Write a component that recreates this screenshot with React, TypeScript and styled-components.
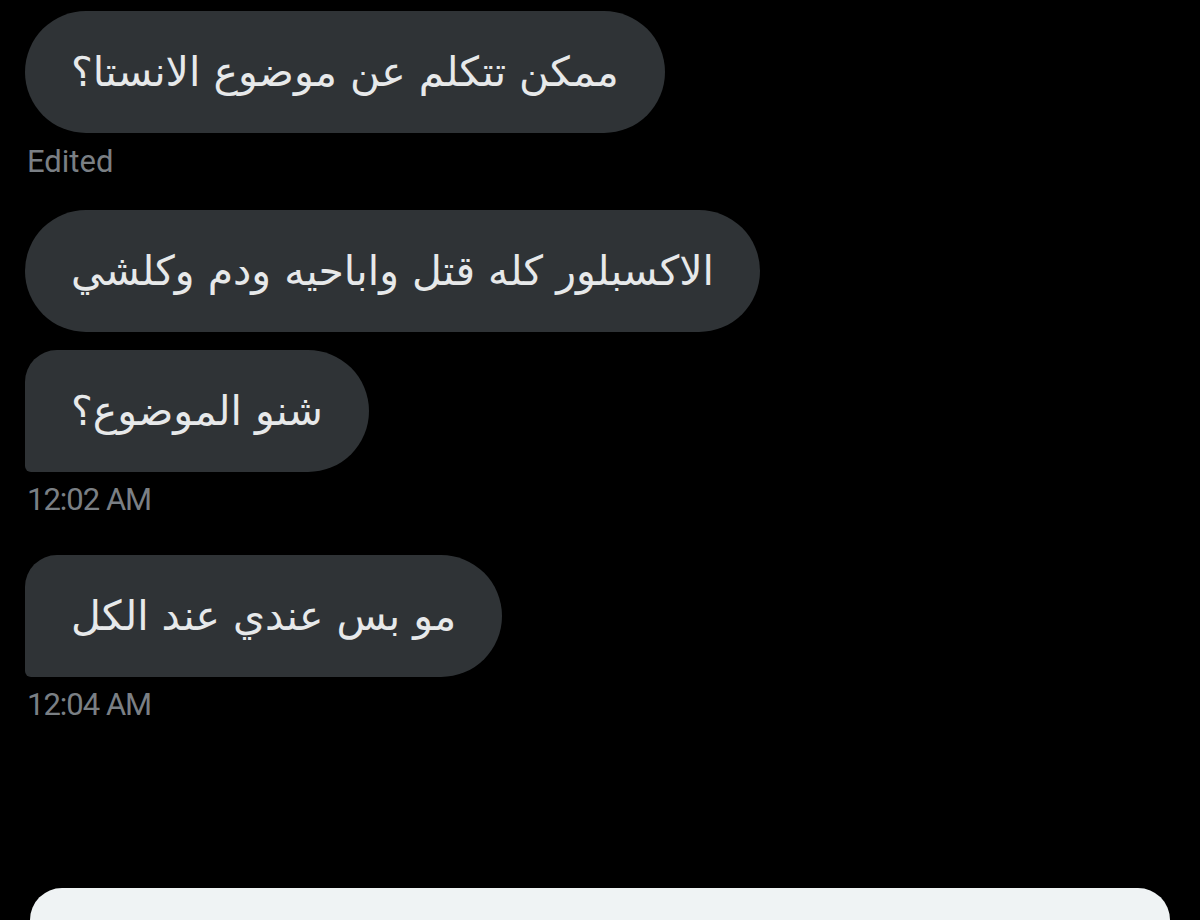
import React from "react";
import styled, { createGlobalStyle } from "styled-components";

const Global = createGlobalStyle`
  html, body { margin: 0; padding: 0; background: #000; }
  body { width: 1200px; height: 920px; overflow: hidden; }
`;

const Screen = styled.div`
  position: relative;
  width: 1200px;
  height: 920px;
  background: #000;
  display: flex;
  flex-direction: column;
  justify-content: space-between;
  overflow: hidden;
`;

const Thread = styled.div`
  display: flex;
  flex-direction: column;
  align-items: flex-start;
  padding: 11px 0 0 25px;
`;

const Bubble = styled.div<{ $tl?: number; $bl?: number; $mt?: number }>`
  box-sizing: border-box;
  height: 122px;
  display: flex;
  align-items: center;
  padding: 0 46px;
  margin-top: ${(p) => p.$mt ?? 0}px;
  background: #2f3336;
  color: #e7e9ea;
  border-radius: ${(p) => p.$tl ?? 61}px 61px 61px ${(p) => p.$bl ?? 61}px;
  direction: rtl;
  font-family: "DejaVu Sans", "Noto Sans", sans-serif;
  font-size: 41px;
  white-space: nowrap;
`;

const Meta = styled.div<{ $mt?: number; $ls?: number }>`
  margin-top: ${(p) => p.$mt ?? 0}px;
  padding-left: 2px;
  color: #7a7f84;
  font-family: Roboto, "Liberation Sans", sans-serif;
  font-size: 31px;
  line-height: 34px;
  letter-spacing: ${(p) => p.$ls ?? 0}px;
`;

const Composer = styled.div`
  margin: 0 30px;
  height: 32px;
  background: #eff3f4;
  border-radius: 52px 52px 0 0;
`;

export default function App() {
  return (
    <Screen>
      <Global />
      <Thread>
        <Bubble>ممكن تتكلم عن موضوع الانستا؟</Bubble>
        <Meta $mt={12}>Edited</Meta>
        <Bubble $mt={31}>الاكسبلور كله قتل واباحيه ودم وكلشي</Bubble>
        <Bubble $mt={18} $tl={32} $bl={6}>شنو الموضوع؟</Bubble>
        <Meta $mt={11} $ls={-1}>12:02 AM</Meta>
        <Bubble $mt={38} $tl={32} $bl={6}>مو بس عندي عند الكل</Bubble>
        <Meta $mt={11} $ls={-1}>12:04 AM</Meta>
      </Thread>
      <Composer />
    </Screen>
  );
}
